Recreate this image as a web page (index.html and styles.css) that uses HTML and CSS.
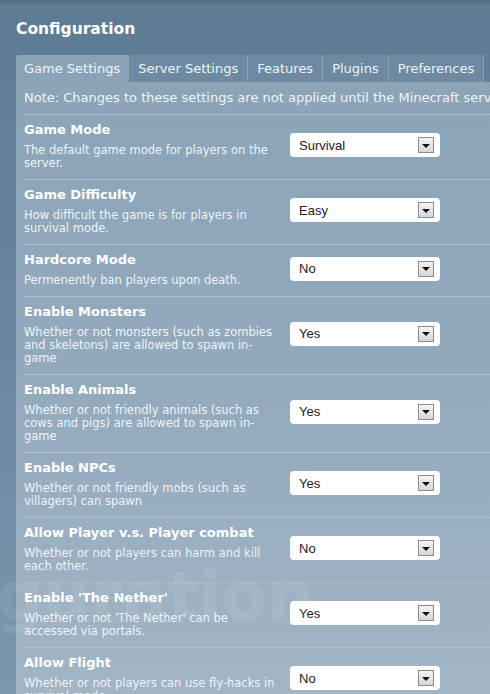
FILE: index.html
```html
<!DOCTYPE html>
<html>
<head>
<meta charset="utf-8">
<link rel="stylesheet" href="styles.css">
</head>
<body>
<div class="page">
  <h1 class="title">Configuration</h1>
  <div class="tabs">
    <div class="tab active">Game Settings</div>
    <div class="tab">Server Settings</div>
    <div class="tab">Features</div>
    <div class="tab">Plugins</div>
    <div class="tab">Preferences</div>
  </div>
  <div class="panel">
    <div class="note">Note: Changes to these settings are not applied until the Minecraft server is restarted.</div>

    <div class="row">
      <div class="info"><div class="name">Game Mode</div><div class="desc">The default game mode for players on the server.</div></div>
      <div class="select"><span>Survival</span><i class="arrow"></i></div>
    </div>
    <div class="row">
      <div class="info"><div class="name">Game Difficulty</div><div class="desc">How difficult the game is for players in survival mode.</div></div>
      <div class="select"><span>Easy</span><i class="arrow"></i></div>
    </div>
    <div class="row">
      <div class="info"><div class="name">Hardcore Mode</div><div class="desc">Permenently ban players upon death.</div></div>
      <div class="select"><span>No</span><i class="arrow"></i></div>
    </div>
    <div class="row">
      <div class="info"><div class="name">Enable Monsters</div><div class="desc">Whether or not monsters (such as zombies and skeletons) are allowed to spawn in-game</div></div>
      <div class="select"><span>Yes</span><i class="arrow"></i></div>
    </div>
    <div class="row">
      <div class="info"><div class="name">Enable Animals</div><div class="desc">Whether or not friendly animals (such as cows and pigs) are allowed to spawn in-game</div></div>
      <div class="select"><span>Yes</span><i class="arrow"></i></div>
    </div>
    <div class="row">
      <div class="info"><div class="name">Enable NPCs</div><div class="desc">Whether or not friendly mobs (such as villagers) can spawn</div></div>
      <div class="select"><span>Yes</span><i class="arrow"></i></div>
    </div>
    <div class="row">
      <div class="info"><div class="name">Allow Player v.s. Player combat</div><div class="desc">Whether or not players can harm and kill each other.</div></div>
      <div class="select"><span>No</span><i class="arrow"></i></div>
    </div>
    <div class="row">
      <div class="info"><div class="name">Enable 'The Nether'</div><div class="desc">Whether or not 'The Nether' can be accessed via portals.</div></div>
      <div class="select"><span>Yes</span><i class="arrow"></i></div>
    </div>
    <div class="row">
      <div class="info"><div class="name">Allow Flight</div><div class="desc">Whether or not players can use fly-hacks in survival mode.</div></div>
      <div class="select"><span>No</span><i class="arrow"></i></div>
    </div>
  </div>
  <div class="watermark">guration</div>
</div>
</body>
</html>
```

FILE: styles.css
```css
html, body {
  margin: 0;
  padding: 0;
}
body {
  width: 490px;
  height: 694px;
  overflow: hidden;
  font-family: "DejaVu Sans", Verdana, sans-serif;
  background: linear-gradient(to bottom, #4f6b82 0px, #5d7c94 6px, #6585a0 300px, #7d97ad 694px);
}
.page {
  position: relative;
  padding-top: 18px;
}
.title {
  margin: 0 0 0 16px;
  height: 37px;
  font-size: 15.5px;
  line-height: 23px;
  font-weight: bold;
  color: #ffffff;
}
.tabs {
  display: flex;
  margin-left: 16px;
  height: 27px;
}
.tab {
  box-sizing: border-box;
  padding: 0 9px;
  line-height: 27px;
  font-size: 13px;
  color: #eef3f7;
  background: #6d8aa2;
  border-left: 1px solid #87a0b4;
  white-space: nowrap;
}
.tab:last-child {
  border-right: 1px solid #87a0b4;
}
.tab.active {
  padding: 0 8px;
  background: #8aa3b7;
  border-left: none;
  border-radius: 3px 0 0 0;
}
.panel {
  margin-left: 16px;
  padding-left: 8px;
  background: linear-gradient(to bottom, #8ba4b8 0px, #93aabd 300px, #a6b8c6 694px);
  min-height: 700px;
}
.note {
  height: 32px;
  line-height: 32px;
  font-size: 13px;
  color: #eef3f7;
  white-space: nowrap;
  overflow: hidden;
  border-bottom: 1px solid #acbfcd;
}
.row {
  display: grid;
  grid-template-columns: 266px 150px;
  align-items: center;
  padding: 7px 0 9px;
  border-bottom: 1px solid #acbfcd;
}
.name {
  font-size: 13px;
  font-weight: bold;
  line-height: 16px;
  color: #ffffff;
}
.desc {
  margin-top: 6px;
  width: 252px;
  font-size: 11.5px;
  line-height: 13px;
  color: #eef3f7;
}
.select {
  box-sizing: border-box;
  height: 24px;
  background: #ffffff;
  border-radius: 4px;
  display: flex;
  align-items: center;
  justify-content: space-between;
  padding: 0 6px 0 9px;
  font-family: "Liberation Sans", Arial, sans-serif;
  font-size: 13px;
  color: #222;
  margin-top: -2px;
}
.arrow {
  box-sizing: border-box;
  width: 16px;
  height: 16px;
  border: 1px solid #8a8a8a;
  background: linear-gradient(to bottom, #f4f4f4, #d6d6d6);
  display: flex;
  align-items: center;
  justify-content: center;
}
.arrow::after {
  content: "";
  width: 0;
  height: 0;
  border-left: 4px solid transparent;
  border-right: 4px solid transparent;
  border-top: 4px solid #111;
  margin-top: 1px;
}
.watermark {
  position: absolute;
  left: -4px;
  top: 562px;
  font-family: "DejaVu Sans", sans-serif;
  font-weight: bold;
  font-size: 66px;
  line-height: 70px;
  color: rgba(255, 255, 255, 0.08);
  pointer-events: none;
  white-space: nowrap;
}
```
